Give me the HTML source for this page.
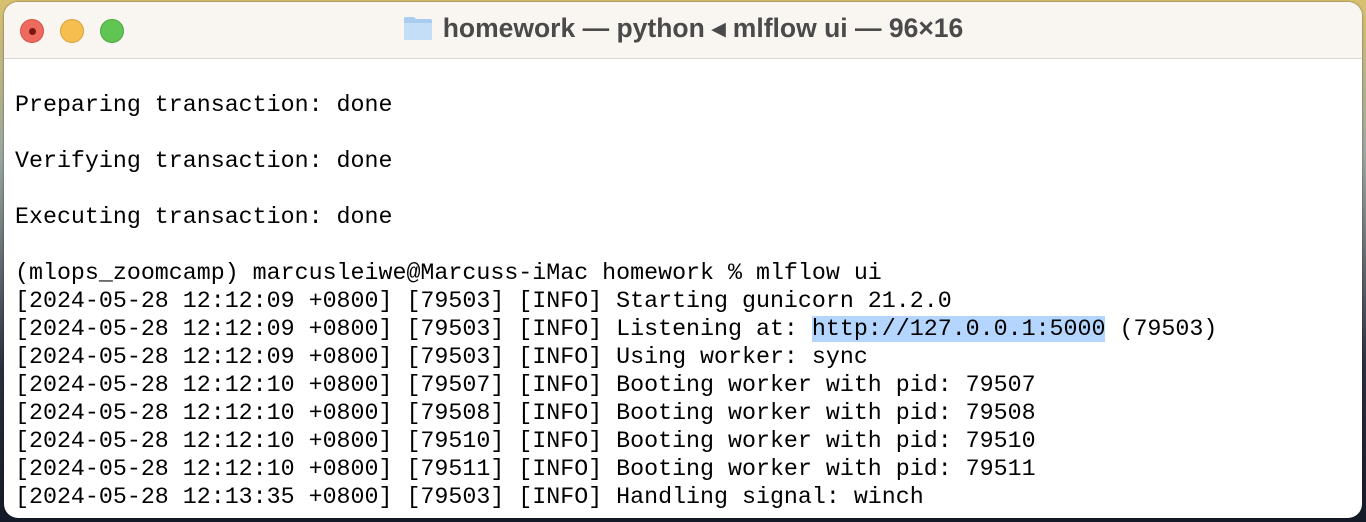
<!DOCTYPE html>
<html><head><meta charset="utf-8"><style>
html,body{margin:0;padding:0;}
body{width:1366px;height:522px;overflow:hidden;position:relative;
background:linear-gradient(180deg,#d8c070 0%,#9aa8a0 30%,#2a3040 70%,#151a28 100%);}
.win{position:absolute;left:4px;top:2px;width:1358px;height:516px;background:#fff;border-radius:14px;overflow:hidden;box-shadow:0 0 2px rgba(0,0,0,.5);}
.tb{position:absolute;left:0;top:0;right:0;height:56px;background:#f9f6f1;border-bottom:1px solid #d9d5d0;}
.dot{position:absolute;top:17px;width:24px;height:24px;border-radius:50%;}
.title{position:absolute;left:0;right:0;top:11px;text-align:center;font:bold 26.5px "Liberation Sans",sans-serif;color:#4a4a4a;}
pre{position:absolute;left:11px;top:89px;margin:0;font:23.3px/28px "Liberation Mono",monospace;color:#000;}
.hl{background:#b4d5fe;}
</style></head><body>
<div class="win">
<div class="tb">
<div class="dot" style="left:16px;background:#ee6a5e;border:1px solid #d55447;width:22px;height:22px"><div style="position:absolute;left:8px;top:8px;width:7px;height:7px;border-radius:50%;background:#7a1610"></div></div>
<div class="dot" style="left:56px;background:#f5be4f;border:1px solid #d9a23e;width:22px;height:22px"></div>
<div class="dot" style="left:96px;background:#61c554;border:1px solid #4aa63d;width:22px;height:22px"></div>
<div class="title"><svg width="30" height="26" viewBox="0 0 30 26" style="vertical-align:-4px;margin-right:10px"><path d="M1 4 Q1 2 3 2 H11 L13 4 H27 Q29 4 29 6 V23 Q29 25 27 25 H3 Q1 25 1 23Z" fill="#a9cdf0"/><path d="M1 8 H29 V23 Q29 25 27 25 H3 Q1 25 1 23Z" fill="#c3def6"/></svg>homework — python ◂ mlflow ui — 96×16</div>
</div>
<pre>Preparing transaction: done

Verifying transaction: done

Executing transaction: done

(mlops_zoomcamp) marcusleiwe@Marcuss-iMac homework % mlflow ui
[2024-05-28 12:12:09 +0800] [79503] [INFO] Starting gunicorn 21.2.0
[2024-05-28 12:12:09 +0800] [79503] [INFO] Listening at: <span class="hl">http://127.0.0.1:5000</span> (79503)
[2024-05-28 12:12:09 +0800] [79503] [INFO] Using worker: sync
[2024-05-28 12:12:10 +0800] [79507] [INFO] Booting worker with pid: 79507
[2024-05-28 12:12:10 +0800] [79508] [INFO] Booting worker with pid: 79508
[2024-05-28 12:12:10 +0800] [79510] [INFO] Booting worker with pid: 79510
[2024-05-28 12:12:10 +0800] [79511] [INFO] Booting worker with pid: 79511
[2024-05-28 12:13:35 +0800] [79503] [INFO] Handling signal: winch</pre>
</div>
</body></html>
